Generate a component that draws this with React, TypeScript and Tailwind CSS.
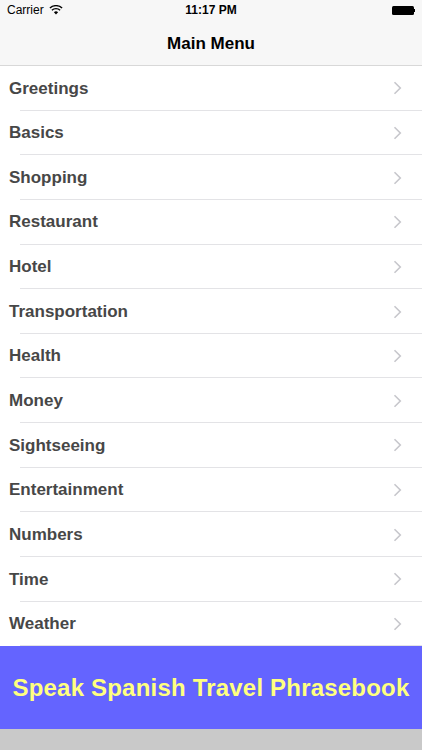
import React from "react";

const items = [
  "Greetings",
  "Basics",
  "Shopping",
  "Restaurant",
  "Hotel",
  "Transportation",
  "Health",
  "Money",
  "Sightseeing",
  "Entertainment",
  "Numbers",
  "Time",
  "Weather",
];

function Chevron() {
  return (
    <svg width="9" height="14" viewBox="0 0 9 14" fill="none">
      <path d="M1.5 1.2L7.3 7L1.5 12.8" stroke="#c7c7cc" strokeWidth="1.6" />
    </svg>
  );
}

function Wifi() {
  return (
    <svg width="14" height="10" viewBox="0 0 14 10">
      <path d="M7 9.6L4.9 7.3A3 3 0 0 1 9.1 7.3Z" fill="#000" />
      <path d="M2.9 5.3A5.8 5.8 0 0 1 11.1 5.3" stroke="#000" strokeWidth="1.4" fill="none" />
      <path d="M0.9 3.1A8.8 8.8 0 0 1 13.1 3.1" stroke="#000" strokeWidth="1.4" fill="none" />
    </svg>
  );
}

export default function App() {
  return (
    <div
      className="w-[422px] h-[750px] bg-white flex flex-col overflow-hidden"
      style={{ fontFamily: '"Liberation Sans", Arial, sans-serif' }}
    >
      <div className="bg-[#f7f7f7] border-b border-[#d8d8d8]">
        <div className="h-[20px] flex items-center justify-between px-[7px] text-[12px] text-black relative">
          <div className="flex items-center gap-[5px]">
            <span>Carrier</span>
            <Wifi />
          </div>
          <span className="absolute left-1/2 -translate-x-1/2 font-bold text-[12px]">11:17 PM</span>
          <div className="flex items-center">
            <div className="w-[22px] h-[9px] bg-black rounded-[1.5px]" />
            <div className="w-[1.5px] h-[3px] bg-black" />
          </div>
        </div>
        <div className="h-[45px] flex items-center justify-center pt-[2px]">
          <span className="font-bold text-[17px] text-black">Main Menu</span>
        </div>
      </div>
      <div className="flex flex-col">
        {items.map((it) => (
          <div key={it} className="h-[44.65px] flex items-stretch">
            <span className="w-[20px] shrink-0" />
            <div className="flex-1 relative flex items-center justify-end border-b border-[#e3e3e6] pr-[20px] pt-[1px]">
              <span className="absolute left-[-11px] font-bold text-[17px] text-[#474747]">{it}</span>
              <Chevron />
            </div>
          </div>
        ))}
      </div>
      <div className="h-[83px] bg-[#6464ff] flex items-center justify-center">
        <span className="font-bold text-[24px] text-[#ffff80] tracking-[0.2px]">Speak Spanish Travel Phrasebook</span>
      </div>
      <div className="flex-1 bg-[#c9c9c9]" />
    </div>
  );
}
